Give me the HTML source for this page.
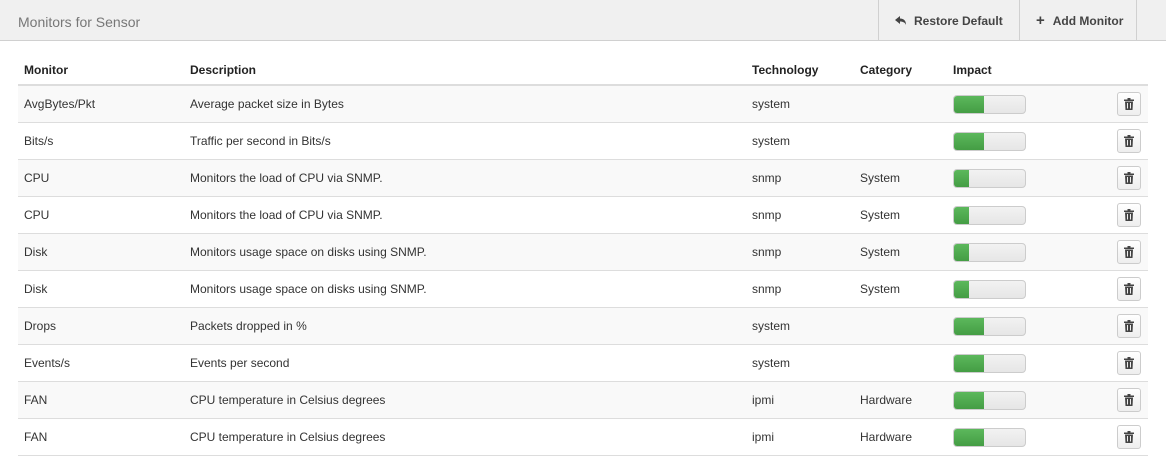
<!DOCTYPE html>
<html><head><meta charset="utf-8"><style>
body{margin:0;width:1166px;height:458px;background:#fff;font-family:"Liberation Sans",sans-serif;font-size:12px;color:#333;overflow:hidden;position:relative}
.top{position:absolute;left:0;top:0;width:1166px;height:40px;background:#f0f0f0;border-bottom:1px solid #d0d0d0}
.top .t{position:absolute;left:18px;top:14px;font-size:14px;color:#777}
.btn{position:absolute;top:0;height:40px;border-left:1px solid #d0d0d0;font-weight:bold;color:#444;font-size:12px;line-height:42px;box-sizing:border-box;padding-left:16px}
table{position:absolute;left:18px;top:56px;width:1130px;border-collapse:collapse}
th{text-align:left;font-weight:bold;height:28px;padding:0 6px;border-bottom:2px solid #ddd;font-size:12px;color:#222}
td{height:36px;padding:0 6px;border-bottom:1px solid #ddd;font-size:12px;color:#333}
tr.s td{background:#f9f9f9}
.bar{width:71px;height:17px;border:1px solid #ccc;border-radius:4px;background:linear-gradient(#f2f2f2,#e6e6e6);position:relative;overflow:hidden}
.bar i{position:absolute;left:0;top:0;bottom:0;background:linear-gradient(#5cb85c,#449d44)}
.tr{width:22px;height:22px;border:1px solid #ccc;border-radius:3px;background:linear-gradient(#fff,#eee);margin-left:auto;margin-right:1px;display:flex;align-items:center;justify-content:center}
</style></head><body>
<div class="top"><span class="t">Monitors for Sensor</span>
<div class="btn" style="left:878px;width:141px"><svg width="12" height="10" viewBox="0 0 12 10" style="margin-right:7px;vertical-align:-1px"><path d="M0 4L5 0V2.5C9 2.5 11 5 11 9C10 6.5 8 5.5 5 5.5V8Z" fill="#444"/></svg>Restore Default</div>
<div class="btn" style="left:1019px;width:118px;border-right:1px solid #d0d0d0"><span style="font-size:15px;margin-right:8px">+</span>Add Monitor</div>
</div>
<table>
<tr><th style="width:154px">Monitor</th><th style="width:550px">Description</th><th style="width:96px">Technology</th><th style="width:81px">Category</th><th style="width:100px">Impact</th><th></th></tr>
<tr class="s"><td>AvgBytes/Pkt</td><td>Average packet size in Bytes</td><td>system</td><td></td><td><div class="bar"><i style="width:30px"></i></div></td><td><div class="tr">🗑</div></td></tr>
<tr><td>Bits/s</td><td>Traffic per second in Bits/s</td><td>system</td><td></td><td><div class="bar"><i style="width:30px"></i></div></td><td><div class="tr">🗑</div></td></tr>
<tr class="s"><td>CPU</td><td>Monitors the load of CPU via SNMP.</td><td>snmp</td><td>System</td><td><div class="bar"><i style="width:15px"></i></div></td><td><div class="tr">🗑</div></td></tr>
<tr><td>CPU</td><td>Monitors the load of CPU via SNMP.</td><td>snmp</td><td>System</td><td><div class="bar"><i style="width:15px"></i></div></td><td><div class="tr">🗑</div></td></tr>
<tr class="s"><td>Disk</td><td>Monitors usage space on disks using SNMP.</td><td>snmp</td><td>System</td><td><div class="bar"><i style="width:15px"></i></div></td><td><div class="tr">🗑</div></td></tr>
<tr><td>Disk</td><td>Monitors usage space on disks using SNMP.</td><td>snmp</td><td>System</td><td><div class="bar"><i style="width:15px"></i></div></td><td><div class="tr">🗑</div></td></tr>
<tr class="s"><td>Drops</td><td>Packets dropped in %</td><td>system</td><td></td><td><div class="bar"><i style="width:30px"></i></div></td><td><div class="tr">🗑</div></td></tr>
<tr><td>Events/s</td><td>Events per second</td><td>system</td><td></td><td><div class="bar"><i style="width:30px"></i></div></td><td><div class="tr">🗑</div></td></tr>
<tr class="s"><td>FAN</td><td>CPU temperature in Celsius degrees</td><td>ipmi</td><td>Hardware</td><td><div class="bar"><i style="width:30px"></i></div></td><td><div class="tr">🗑</div></td></tr>
<tr><td>FAN</td><td>CPU temperature in Celsius degrees</td><td>ipmi</td><td>Hardware</td><td><div class="bar"><i style="width:30px"></i></div></td><td><div class="tr">🗑</div></td></tr>
</table>
<script>
document.querySelectorAll('.tr').forEach(e=>{e.innerHTML='<svg width="10" height="12" viewBox="0 0 10 12"><rect x="0" y="1.5" width="10" height="1.5" fill="#444"/><rect x="3.5" y="0" width="3" height="2" fill="#444"/><path d="M1 3.5H9L8.5 12H1.5Z" fill="#444"/><rect x="3" y="5" width="1" height="5.5" fill="#eee"/><rect x="6" y="5" width="1" height="5.5" fill="#eee"/></svg>'});
</script>
</body></html>
